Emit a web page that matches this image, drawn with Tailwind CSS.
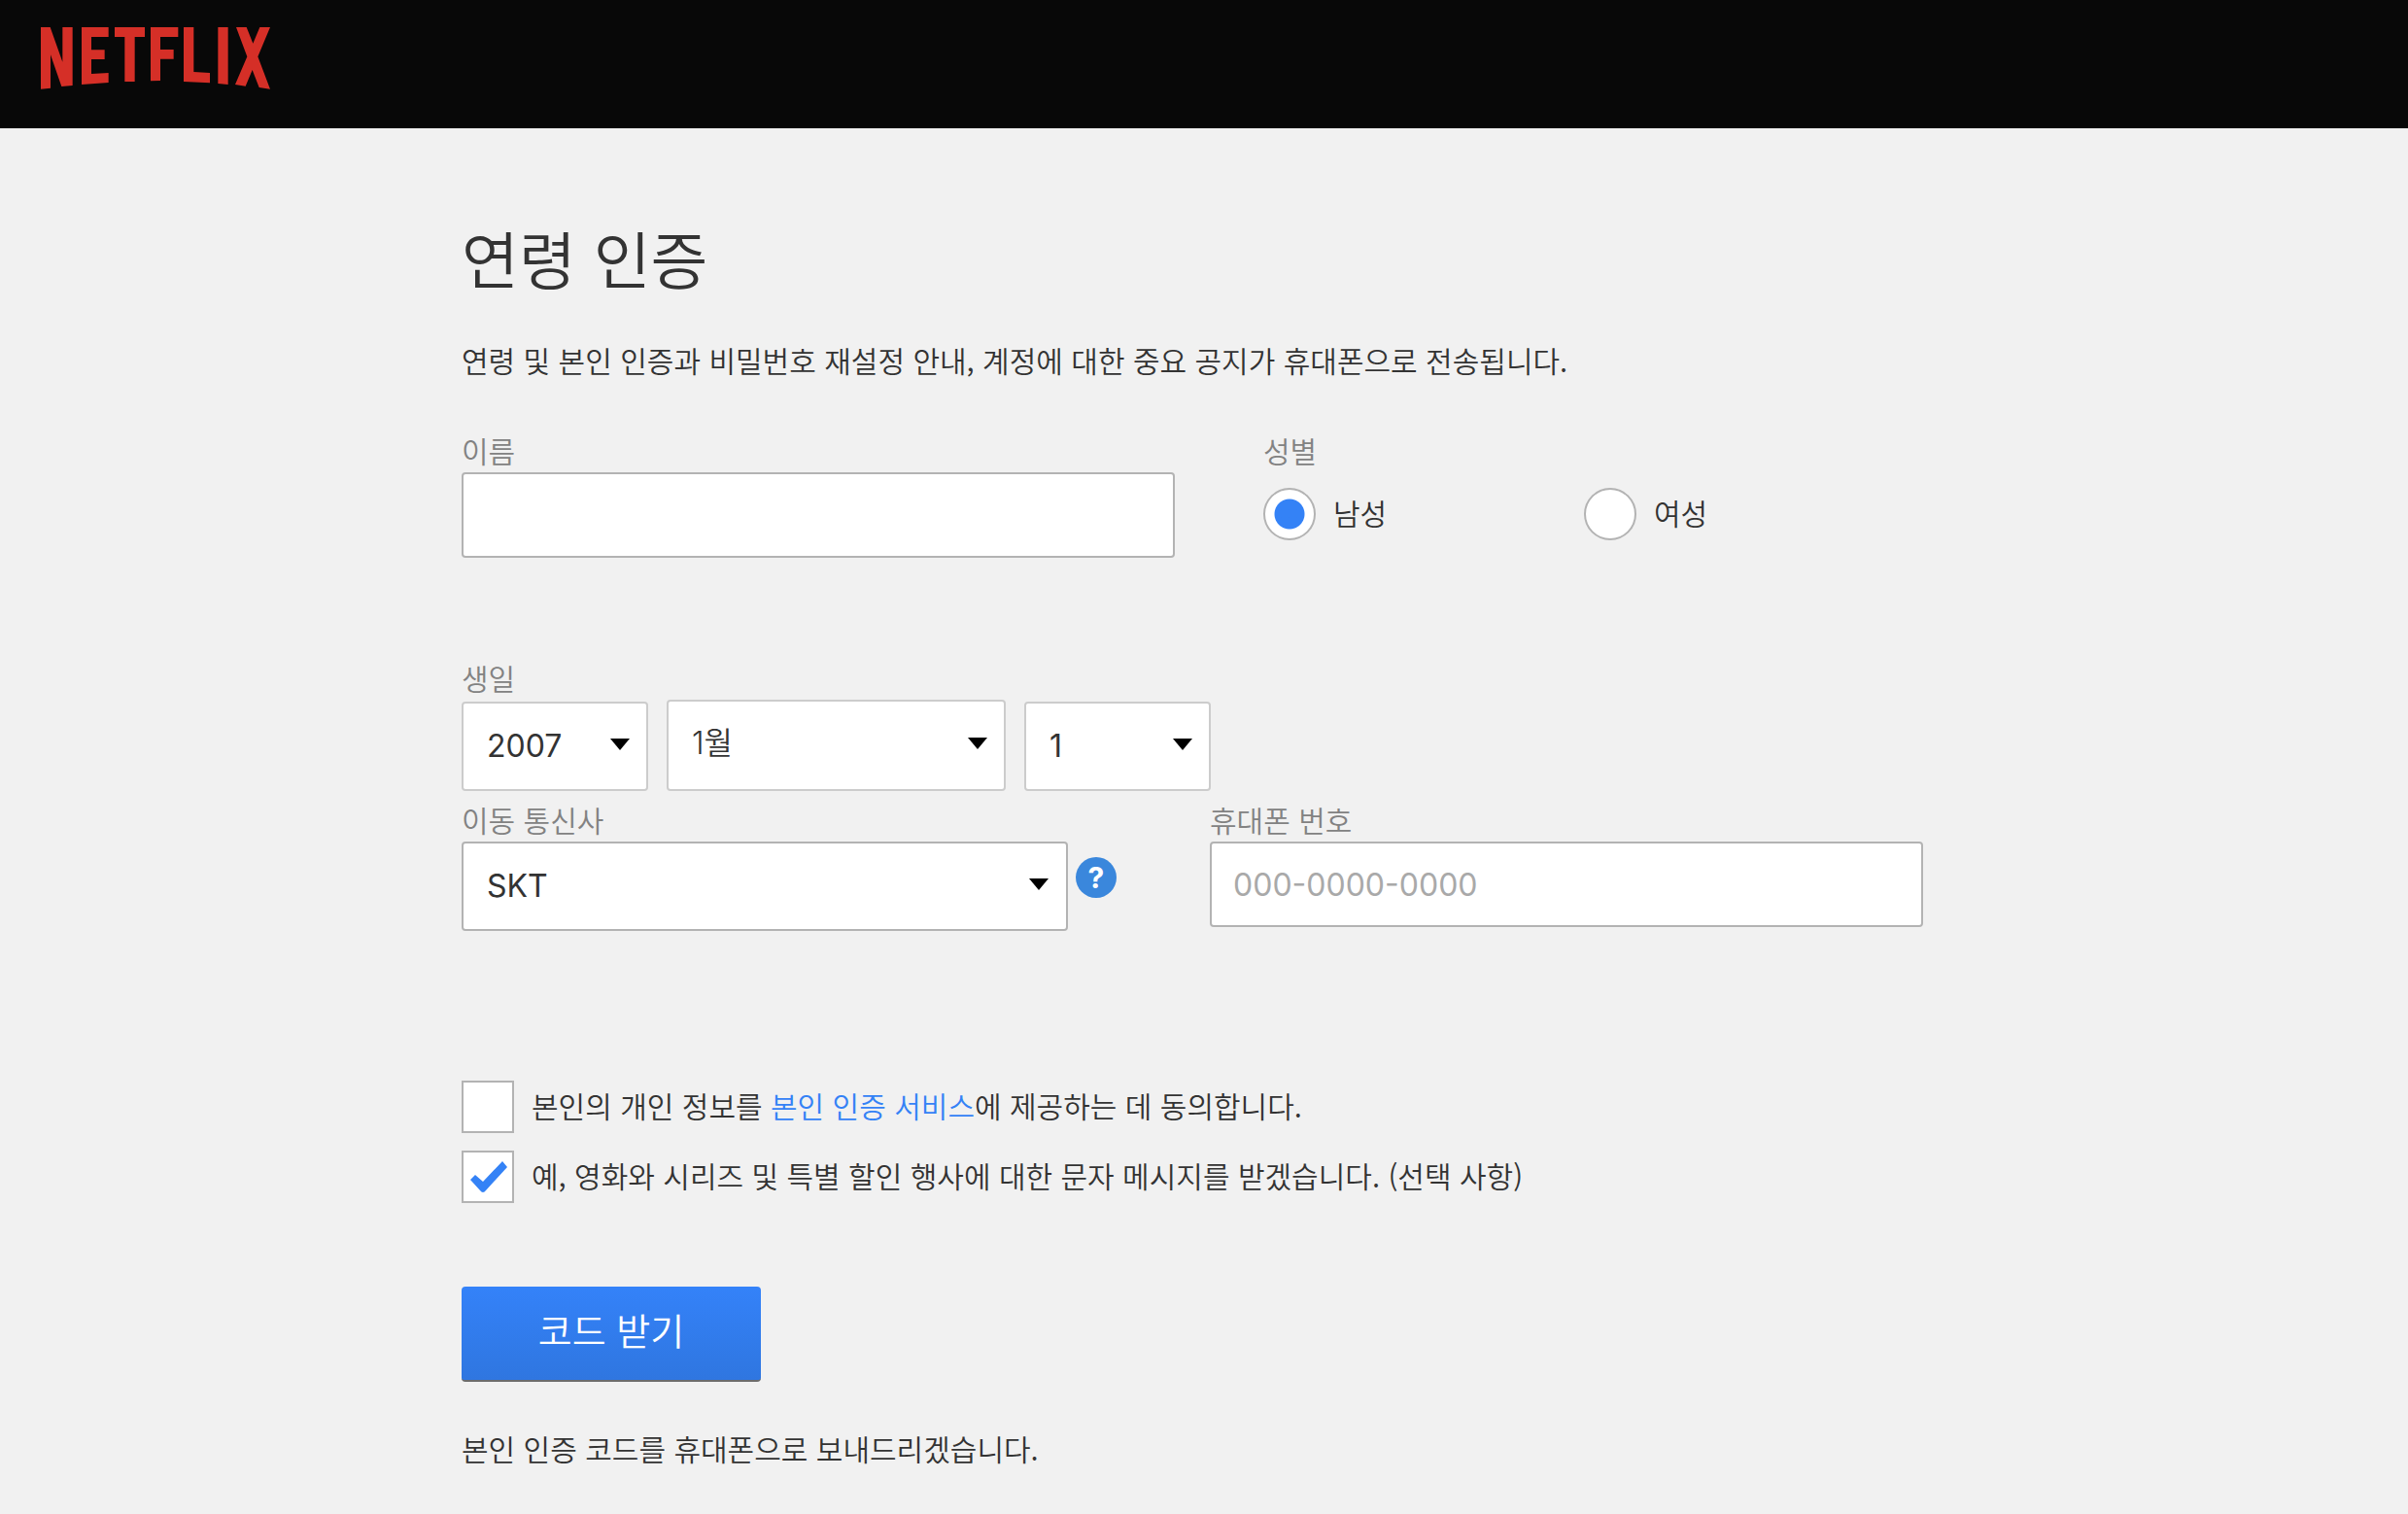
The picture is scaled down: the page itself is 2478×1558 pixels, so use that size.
<!DOCTYPE html>
<html lang="ko">
<head>
<meta charset="utf-8">
<title>연령 인증</title>
<meta name="viewport" content="width=device-width, initial-scale=1">
<script src="https://cdn.jsdelivr.net/npm/@tailwindcss/browser@4"></script>
</head>
<body class="min-h-screen bg-[#f1f1f1] font-['Noto_Sans_CJK_KR','Noto_Sans',sans-serif] text-[30px] leading-[40px] font-[350] text-[#333]">
<header class="flex h-[132px] items-start bg-[#080808] px-[42px] pt-7">
  <a href="#" aria-label="NETFLIX">
    <svg class="h-16 w-[236px]" viewBox="66 54 708 192" fill="#d52f27" aria-hidden="true">
      <path d="M66 54H95L133 161V54H164V234L130 237L96 139V242L66 245Z"/>
      <path d="M192 54H275V84H222V124H263V153H222V198L275 195V225L192 231Z"/>
      <path d="M294 54H387V84H356V222H325V84H294Z"/>
      <path d="M405 54H490V84H435V123H476V152H435V219L405 220Z"/>
      <path d="M507 54H538V192L588 195V226L507 222Z"/>
      <path d="M613 54H644V231L613 228Z"/>
      <path d="M669 54H701L721 104L742 54H774L736 145L774 245L740 240L719 186L698 236L666 231L703 145Z"/>
    </svg>
  </a>
</header>
<main class="mx-auto max-w-[1528px] pt-[94px]">
  <h1 class="text-[64px] leading-[76px]">연령 인증</h1>
  <p class="mt-12">연령 및 본인 인증과 비밀번호 재설정 안내, 계정에 대한 중요 공지가 휴대폰으로 전송됩니다.</p>
  <form class="mt-[54px]">
    <div class="flex gap-[91px]">
      <div class="flex w-[734px] flex-col">
        <label for="name" class="h-[42px] leading-[38px] text-[#828282]">이름</label>
        <input id="name" type="text" class="h-[88px] rounded-[4px] border-2 border-[#b3b3b3] bg-white px-[22px]">
      </div>
      <fieldset>
        <legend class="h-[42px] leading-[38px] text-[#828282]">성별</legend>
        <div class="flex pt-4">
          <div class="flex w-[330px] items-center gap-[18px]">
            <input id="male" type="radio" name="gender" checked class="size-[54px] appearance-none rounded-full border-2 border-[#b3b3b3] bg-white checked:bg-radial checked:from-[#3482f6] checked:from-[15px] checked:to-white checked:to-[16px]">
            <label for="male" class="pb-1">남성</label>
          </div>
          <div class="flex items-center gap-[18px]">
            <input id="female" type="radio" name="gender" class="size-[54px] appearance-none rounded-full border-2 border-[#b3b3b3] bg-white checked:bg-radial checked:from-[#3482f6] checked:from-[15px] checked:to-white checked:to-[16px]">
            <label for="female" class="pb-1">여성</label>
          </div>
        </div>
      </fieldset>
    </div>
    <fieldset class="mt-[104px]">
      <legend class="h-[42px] leading-[38px] text-[#828282]">생일</legend>
      <div class="flex items-end gap-[19px]">
        <div class="grid w-[192px] items-center">
          <select aria-label="연도" class="col-start-1 row-start-1 h-[92px] appearance-none rounded-[4px] border-2 border-[#ccc] bg-white pl-6 font-['Inter',sans-serif] text-[32px] font-normal"><option>2007</option></select>
          <svg class="pointer-events-none col-start-1 row-start-1 mr-[19px] mb-1 h-3 w-5 justify-self-end" viewBox="0 0 20 12"><path d="M0 0H20L10 12Z"/></svg>
        </div>
        <div class="grid w-[349px] items-center">
          <select aria-label="월" class="col-start-1 row-start-1 h-[94px] appearance-none rounded-[4px] border-2 border-[#ccc] bg-white pb-1 pl-6 font-['Inter','Noto_Sans_CJK_KR',sans-serif] text-[32px]"><option>1월</option></select>
          <svg class="pointer-events-none col-start-1 row-start-1 mr-[19px] mb-1 h-3 w-5 justify-self-end" viewBox="0 0 20 12"><path d="M0 0H20L10 12Z"/></svg>
        </div>
        <div class="grid w-[192px] items-center">
          <select aria-label="일" class="col-start-1 row-start-1 h-[92px] appearance-none rounded-[4px] border-2 border-[#ccc] bg-white pl-6 font-['Inter',sans-serif] text-[32px] font-normal"><option>1</option></select>
          <svg class="pointer-events-none col-start-1 row-start-1 mr-[19px] mb-1 h-3 w-5 justify-self-end" viewBox="0 0 20 12"><path d="M0 0H20L10 12Z"/></svg>
        </div>
      </div>
    </fieldset>
    <div class="mt-[10px] flex">
      <div class="w-[770px]">
        <label for="carrier" class="block h-[42px] leading-[38px] text-[#828282]">이동 통신사</label>
        <div class="flex gap-2">
          <div class="grid w-[624px] items-center">
            <select id="carrier" class="col-start-1 row-start-1 h-[92px] appearance-none rounded-[4px] border-2 border-[#b3b3b3] bg-white pl-6 font-['Inter',sans-serif] text-[32px] font-normal"><option>SKT</option></select>
            <svg class="pointer-events-none col-start-1 row-start-1 mr-5 mb-1 h-3 w-5 justify-self-end" viewBox="0 0 20 12"><path d="M0 0H20L10 12Z"/></svg>
          </div>
          <button type="button" aria-label="도움말" class="mt-4 flex size-[42px] items-center justify-center rounded-full bg-[#3a87dc] font-['Inter',sans-serif] text-[30px] font-bold text-white">?</button>
        </div>
      </div>
      <div class="flex w-[734px] flex-col">
        <label for="phone" class="h-[42px] leading-[38px] text-[#828282]">휴대폰 번호</label>
        <input id="phone" type="tel" placeholder="000-0000-0000" class="h-[88px] rounded-[4px] border-2 border-[#b3b3b3] bg-white px-[22px] font-['Inter',sans-serif] text-[32px] font-normal placeholder:text-[#a9a9a9]">
      </div>
    </div>
    <div class="mt-[154px] flex flex-col gap-[18px]">
      <div class="flex items-center gap-[18px]">
        <input id="agree" type="checkbox" class="size-[54px] appearance-none border-2 border-[#b3b3b3] bg-white">
        <label for="agree" class="pb-1">본인의 개인 정보를 <a href="#" class="text-[#3482f6]">본인 인증 서비스</a>에 제공하는 데 동의합니다.</label>
      </div>
      <div class="flex items-center gap-[18px]">
        <div class="grid">
          <input id="sms" type="checkbox" checked class="peer col-start-1 row-start-1 size-[54px] appearance-none border-2 border-[#b3b3b3] bg-white">
          <svg class="pointer-events-none invisible col-start-1 row-start-1 size-[54px] peer-checked:visible" viewBox="0 0 54 54" fill="#3482f6"><path d="M9 30L14 25L22 32L42 11L47 17L25 41Q22 45 19 41Z"/></svg>
        </div>
        <label for="sms" class="pb-1">예, 영화와 시리즈 및 특별 할인 행사에 대한 문자 메시지를 받겠습니다. (선택 사항)</label>
      </div>
    </div>
    <button type="submit" class="mt-[86px] h-[98px] w-[308px] rounded-[4px] border-b-2 border-[#6c6c6c] bg-linear-to-b from-[#3482f9] to-[#2f76e0] pb-2 text-[38px] text-white">코드 받기</button>
    <p class="mt-[48px] pb-[44px]">본인 인증 코드를 휴대폰으로 보내드리겠습니다.</p>
  </form>
</main>
</body>
</html>
